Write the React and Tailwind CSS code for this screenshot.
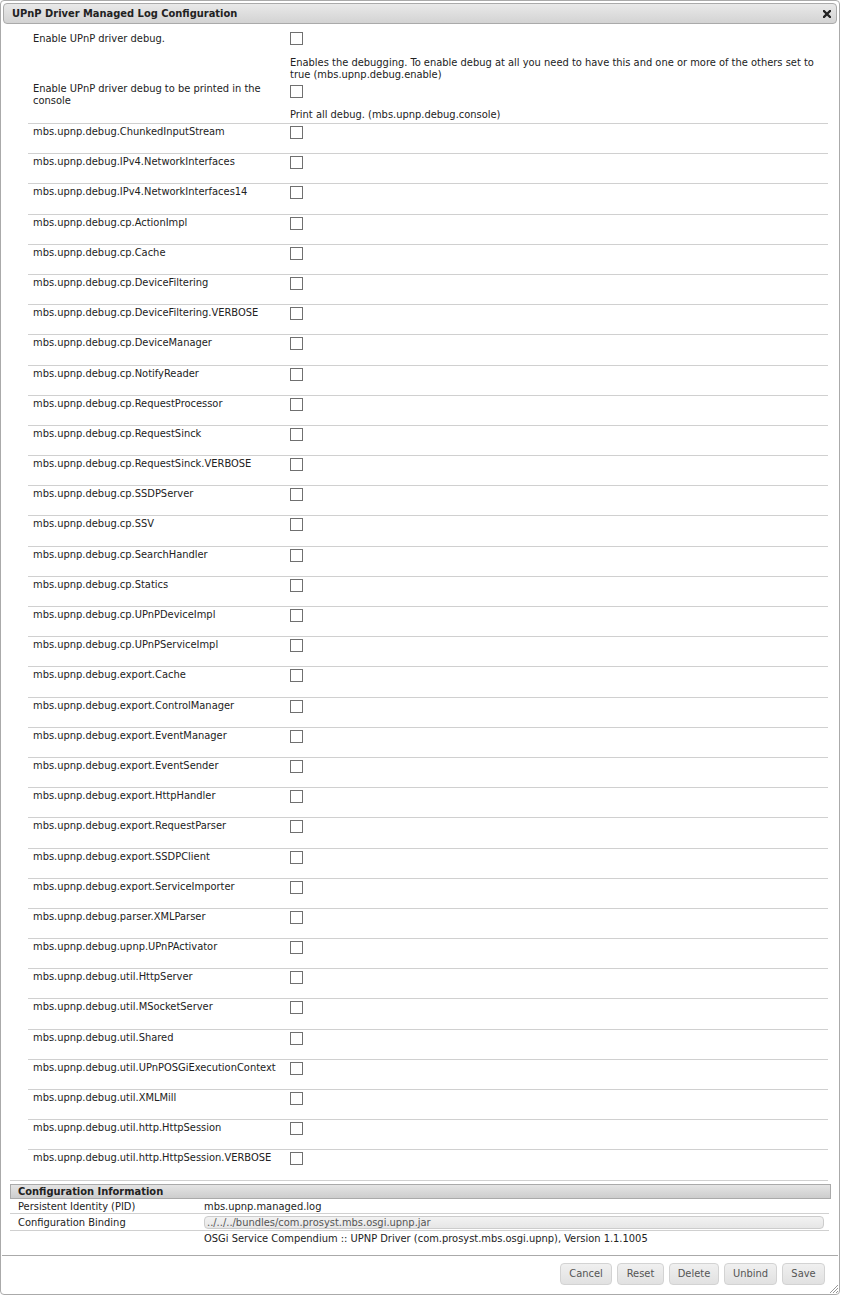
import React from "react";

const items = [
  "mbs.upnp.debug.ChunkedInputStream",
  "mbs.upnp.debug.IPv4.NetworkInterfaces",
  "mbs.upnp.debug.IPv4.NetworkInterfaces14",
  "mbs.upnp.debug.cp.ActionImpl",
  "mbs.upnp.debug.cp.Cache",
  "mbs.upnp.debug.cp.DeviceFiltering",
  "mbs.upnp.debug.cp.DeviceFiltering.VERBOSE",
  "mbs.upnp.debug.cp.DeviceManager",
  "mbs.upnp.debug.cp.NotifyReader",
  "mbs.upnp.debug.cp.RequestProcessor",
  "mbs.upnp.debug.cp.RequestSinck",
  "mbs.upnp.debug.cp.RequestSinck.VERBOSE",
  "mbs.upnp.debug.cp.SSDPServer",
  "mbs.upnp.debug.cp.SSV",
  "mbs.upnp.debug.cp.SearchHandler",
  "mbs.upnp.debug.cp.Statics",
  "mbs.upnp.debug.cp.UPnPDeviceImpl",
  "mbs.upnp.debug.cp.UPnPServiceImpl",
  "mbs.upnp.debug.export.Cache",
  "mbs.upnp.debug.export.ControlManager",
  "mbs.upnp.debug.export.EventManager",
  "mbs.upnp.debug.export.EventSender",
  "mbs.upnp.debug.export.HttpHandler",
  "mbs.upnp.debug.export.RequestParser",
  "mbs.upnp.debug.export.SSDPClient",
  "mbs.upnp.debug.export.ServiceImporter",
  "mbs.upnp.debug.parser.XMLParser",
  "mbs.upnp.debug.upnp.UPnPActivator",
  "mbs.upnp.debug.util.HttpServer",
  "mbs.upnp.debug.util.MSocketServer",
  "mbs.upnp.debug.util.Shared",
  "mbs.upnp.debug.util.UPnPOSGiExecutionContext",
  "mbs.upnp.debug.util.XMLMill",
  "mbs.upnp.debug.util.http.HttpSession",
  "mbs.upnp.debug.util.http.HttpSession.VERBOSE",
];

function Checkbox() {
  return <div className="w-[13px] h-[13px] border border-[#707070] bg-white" />;
}

const buttons = [
  ["Cancel", "w-[52px]"],
  ["Reset", "w-[47px]"],
  ["Delete", "w-[50px]"],
  ["Unbind", "w-[53px]"],
  ["Save", "w-[43px]"],
];

export default function App() {
  return (
    <div
      className="relative w-[840px] h-[1295px] border border-[#aaaaaa] rounded-[4px] bg-white flex flex-col p-[2px] text-[11px] text-[#222222] font-stretch-condensed"
      style={{ fontFamily: '"DejaVu Sans Condensed", "DejaVu Sans", "Liberation Sans", sans-serif' }}
    >
      {/* Title bar */}
      <div className="h-[21px] shrink-0 flex items-center justify-between border border-[#aaaaaa] rounded-[4px] bg-linear-to-b from-[#e9e9e9] to-[#d3d3d3] pl-[8px] pr-[5px]">
        <span className="font-bold leading-[13px]">UPnP Driver Managed Log Configuration</span>
        <svg width="8" height="8" viewBox="0 0 8 8" className="block">
          <path d="M1 1 L7 7 M7 1 L1 7" stroke="#222" strokeWidth="2.3" strokeLinecap="square" />
        </svg>
      </div>

      {/* Content */}
      <div className="flex-1 flex flex-col">
        <div className="ml-[25px] w-[800px]">
          {/* Row: enable debug */}
          <div className="grid grid-cols-[257px_1fr] h-[57px]">
            <div className="pl-[5px] pt-[8px] leading-[13px]">Enable UPnP driver debug.</div>
            <div className="pl-[5px] pt-[8px]">
              <Checkbox />
              <div className="mt-[12px] leading-[12px] whitespace-nowrap">
                Enables the debugging. To enable debug at all you need to have this and one or more of the others set to
                <br />
                true (mbs.upnp.debug.enable)
              </div>
            </div>
          </div>
          {/* Row: console */}
          <div className="grid grid-cols-[257px_1fr] h-[43px] border-b border-[#d0d0d0]">
            <div className="pl-[5px] pt-[2px] leading-[12px] whitespace-nowrap">
              Enable UPnP driver debug to be printed in the
              <br />
              console
            </div>
            <div className="pl-[5px] pt-[4px]">
              <Checkbox />
              <div className="mt-[11px] leading-[12px] whitespace-nowrap">Print all debug. (mbs.upnp.debug.console)</div>
            </div>
          </div>
          {items.map((name, i) => (
            <div
              key={name}
              className={
                i === items.length - 1
                  ? "grid grid-cols-[257px_1fr] h-[29.2px]"
                  : "grid grid-cols-[257px_1fr] h-[30.2px] border-b border-[#d0d0d0]"
              }
            >
              <div className="pl-[5px] pt-[1px] leading-[13px] whitespace-nowrap">{name}</div>
              <div className="pl-[5px] pt-[2px]">
                <Checkbox />
              </div>
            </div>
          ))}
        </div>
        <div className="ml-[7px] w-[818px] h-px bg-[#d0d0d0]" />

        {/* Configuration Information */}
        <div className="ml-[7px] mt-[3px]">
          <div className="w-[821px] h-[15px] border border-[#aaaaaa] bg-linear-to-b from-[#e4e4e4] to-[#cdcdcd] pl-[7px] font-bold leading-[13px]">
            Configuration Information
          </div>
          <div className="w-[819px]">
            <div className="grid grid-cols-[194px_1fr] h-[15px] border-b border-[#d0d0d0]">
              <div className="pl-[8px] pt-[1px] leading-[13px]">Persistent Identity (PID)</div>
              <div className="pt-[1px] leading-[13px]">mbs.upnp.managed.log</div>
            </div>
            <div className="grid grid-cols-[194px_1fr] h-[17px] border-b border-[#d0d0d0]">
              <div className="pl-[8px] pt-[2px] leading-[13px]">Configuration Binding</div>
              <div className="pt-[2px] pr-[5px]">
                <div className="h-[13px] border border-[#cccccc] rounded-[4px] bg-linear-to-b from-[#f2f2f2] to-[#e6e6e6] pl-[2px] text-[#555555] leading-[11px]">
                  ../../../bundles/com.prosyst.mbs.osgi.upnp.jar
                </div>
              </div>
            </div>
            <div className="grid grid-cols-[194px_1fr]">
              <div />
              <div className="pt-[1px] leading-[13px]">
                OSGi Service Compendium :: UPNP Driver (com.prosyst.mbs.osgi.upnp), Version 1.1.1005
              </div>
            </div>
          </div>
        </div>
      </div>

      {/* Button pane */}
      <div className="shrink-0 -mx-[1px] h-[37px] border-t border-[#aaaaaa] flex justify-end items-start gap-[5px] pt-[7px] pr-[13px]">
        {buttons.map(([label, w]) => (
          <div
            key={label}
            className={`${w} h-[22px] flex items-center justify-center border border-[#d3d3d3] rounded-[4px] bg-linear-to-b from-[#f0f0f0] to-[#e1e1e1] text-[#555555]`}
          >
            {label}
          </div>
        ))}
      </div>

      {/* Resize grip */}
      <svg width="9" height="9" viewBox="0 0 9 9" className="absolute right-[1px] bottom-[1px]">
        <path d="M9 1 L1 9 M9 4 L4 9 M9 7 L7 9" stroke="#999" strokeWidth="1" />
      </svg>
    </div>
  );
}
